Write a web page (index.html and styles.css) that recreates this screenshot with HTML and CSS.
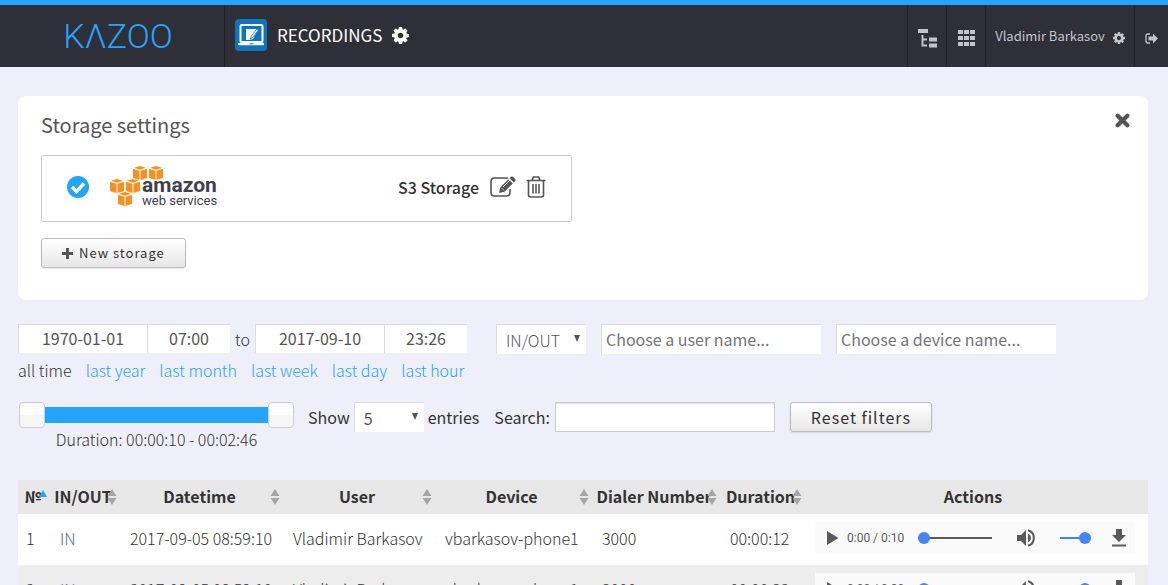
FILE: index.html
```html
<!DOCTYPE html>
<html lang="en">
<head>
<meta charset="utf-8">
<title>Recordings</title>
<link rel="stylesheet" href="styles.css">
</head>
<body>
<svg class="sprite" aria-hidden="true">
  <symbol id="cog" viewBox="0 128 1536 1536"><path d="M1024 896q0-106-75-181t-181-75-181 75-75 181 75 181 181 75 181-75 75-181zm512-109v222q0 12-8 23t-20 13l-185 28q-19 54-39 91 35 50 107 138 10 12 10 25t-9 23q-27 37-99 108t-94 71q-12 0-26-9l-138-108q-44 23-91 38-16 136-29 186-7 28-36 28h-222q-14 0-24.500-8.500t-11.500-21.500l-28-184q-49-16-90-37l-141 107q-10 9-25 9-14 0-25-11-126-114-165-168-7-10-7-23 0-12 8-23 15-21 51-66.500t54-70.500q-27-50-41-99l-183-27q-13-2-21-12.500t-8-23.500v-222q0-12 8-23t19-13l186-28q14-46 39-92-40-57-107-138-10-12-10-24 0-10 9-23 26-36 98.500-107.500t94.500-71.500q13 0 26 10l138 107q44-23 91-38 16-136 29-186 7-28 36-28h222q14 0 24.500 8.500t11.500 21.500l28 184q49 16 90 37l142-107q9-9 24-9 13 0 25 10 129 119 165 170 7 8 7 22 0 12-8 23-15 21-51 66.500t-54 70.500q26 50 41 98l183 28q13 2 21 12.500t8 23.500z"/></symbol>
  <symbol id="cube" viewBox="0 0 14 14"><path d="M7 0l6 1.800-6 2-6-2zM0 2.800l6.500 2V14L0 12zM14 2.800l-6.500 2V14L14 12z"/></symbol>
  <symbol id="sort" viewBox="0 0 10 16"><path d="M5 0l4.500 7h-9zM5 16l4.500-7h-9z"/></symbol>
  <symbol id="play" viewBox="0 0 12 14"><path d="M0 0l11.500 7L0 14z"/></symbol>
  <symbol id="volume" viewBox="0 0 18 18"><path d="M0 6h4l5-5v16l-5-5H0zM11 4.800a4.500 4.500 0 0 1 0 8.400z"/><path d="M11 1.300a8 8 0 0 1 0 15.400" fill="none" stroke="currentColor" stroke-width="2"/></symbol>
  <symbol id="download" viewBox="0 0 14 18"><path d="M4 0h6v6h4l-7 7-7-7h4zM0 15.500h14v2H0z"/></symbol>
</svg>

<header class="topbar">
  <a class="brand" href="#" aria-label="KAZOO">KΛZOO</a>
  <div class="app">
    <svg class="app-icon" viewBox="0 0 32 32"><rect width="32" height="32" rx="4" fill="#0f74bd"/><rect x="5.500" y="6" width="22" height="17" rx="1.500" fill="none" stroke="#fff" stroke-width="2"/><path d="M3 24h26v1.500q0 .7-1 .7H4q-1 0-1-.7z" fill="#fff"/><path d="M14.500 24.800h4" stroke="#0f74bd"/><path d="M11 10h10v4l-3 6-4 1h-3z" fill="#fff"/><path d="M23.500 11l-5.500 7-2.500 2 .8-3 5.500-7z" fill="#fff" stroke="#0f74bd" stroke-width=".8"/></svg>
    <h1 class="app-name">Recordings</h1>
    <button class="plain" aria-label="Recordings settings"><svg class="icon-17"><use href="#cog"/></svg></button>
  </div>
  <nav class="tools">
    <button class="tool" aria-label="Accounts"><svg class="icon-19" viewBox="0 0 19 19"><path d="M0 0h10v4H0zM11 8.500h8v4h-8zM11 14.500h8v4h-8z"/><path d="M4.500 6v10.500H9M4.500 10.500H9" fill="none" stroke="currentColor" stroke-width="2"/></svg></button>
    <button class="tool" aria-label="Applications"><svg class="icon-17" viewBox="0 0 17 17"><path d="M0 0h5v4H0zM6 0h5v4H6zM12 0h5v4h-5zM0 6h5v4H0zM6 6h5v4H6zM12 6h5v4h-5zM0 12h5v4H0zM6 12h5v4H6zM12 12h5v4h-5z"/></svg></button>
    <button class="tool user"><span class="user-name">Vladimir Barkasov</span><svg class="icon-12"><use href="#cog"/></svg></button>
    <button class="tool exit" aria-label="Sign out"><svg class="icon-13" viewBox="0 0 13 12"><path d="M5 1.500H3Q1 1.500 1 3.500v5q0 2 2 2h2" fill="none" stroke="currentColor" stroke-width="1.300"/><path d="M3.500 4H8V1l5 5-5 5V8H3.500z"/></svg></button>
  </nav>
</header>

<main class="page">
  <section class="card">
    <div class="card-head">
      <h2 class="card-title">Storage settings</h2>
      <button class="plain" aria-label="Close"><svg class="icon-15" viewBox="0 0 14 14"><path d="M2.500 2.500l9 9M11.500 2.500l-9 9" stroke="currentColor" stroke-width="4" stroke-linecap="round"/></svg></button>
    </div>
    <div class="storage">
      <svg class="icon-22" viewBox="0 0 22 22"><circle cx="11" cy="11" r="11" fill="#22a5ff"/><path d="M5 11l4.500 4.500L17 7.500" fill="none" stroke="#fff" stroke-width="3.400"/></svg>
      <svg class="aws" viewBox="0 0 112 42" role="img" aria-label="Amazon Web Services">
        <g fill="#f7901e"><use href="#cube" x="23" y="0" width="14" height="14"/><use href="#cube" x="39" y="0" width="14" height="14"/><use href="#cube" x="0" y="13" width="14" height="14"/><use href="#cube" x="16" y="13" width="14" height="14"/><use href="#cube" x="8" y="26" width="14" height="14"/></g>
        <text class="aws-main" x="32" y="26">amazon</text>
        <text class="aws-sub" x="32" y="39">web services</text>
      </svg>
      <strong class="storage-name">S3 Storage</strong>
      <button class="plain" aria-label="Edit storage"><svg class="icon-26" viewBox="0 0 26 22"><path d="M18 2H4.500Q1 2 1 5.500v11Q1 20 4.500 20h12q3.500 0 3.500-3.500V13" fill="none" stroke="currentColor" stroke-width="1.600"/><path d="M9 17l1.200-5.500L18.500 3.200l4.300 4.300-8.300 8.300zM19.500 2.200L21 .8q1-.8 2 0l2.200 2.200q.8 1 0 2l-1.400 1.500z"/><path d="M11.800 12.300l1.900 1.900M13 11l7-7" stroke="#fff" stroke-width=".8"/></svg></button>
      <button class="plain" aria-label="Delete storage"><svg class="icon-22" viewBox="0 0 22 22"><path d="M1.500 4.500h19M7 4.500L8.300 1h5.400L15 4.500M3.500 4.500V19q0 2 2 2h11q2 0 2-2V4.500M8 8v9.500M11 8v9.500M14 8v9.500" fill="none" stroke="currentColor" stroke-width="1.600"/></svg></button>
    </div>
    <button class="btn btn-small"><svg class="icon-11" viewBox="0 0 11 11"><path d="M4 0h3v4h4v3H7v4H4V7H0V4h4z"/></svg>New storage</button>
  </section>

  <form class="filters">
    <div class="row">
      <div class="period">
        <div class="period-fields">
          <input class="field date" aria-label="From date" value="1970-01-01"><input class="field time" aria-label="From time" value="07:00">
          <span class="to">to</span>
          <input class="field date" aria-label="To date" value="2017-09-10"><input class="field time" aria-label="To time" value="23:26">
        </div>
        <div class="presets">
          <a class="preset current" href="#">all time</a><a class="preset" href="#">last year</a><a class="preset" href="#">last month</a><a class="preset" href="#">last week</a><a class="preset" href="#">last day</a><a class="preset" href="#">last hour</a>
        </div>
      </div>
      <span class="pick pick-dir"><select class="select" aria-label="Direction"><option>IN/OUT</option><option>IN</option><option>OUT</option></select></span>
      <input class="field name" aria-label="User name" placeholder="Choose a user name...">
      <input class="field name" aria-label="Device name" placeholder="Choose a device name...">
    </div>
    <div class="row">
      <div class="duration">
        <div class="slider">
          <input class="range" type="range" aria-label="Minimum duration" min="10" max="166" value="10">
          <input class="range" type="range" aria-label="Maximum duration" min="10" max="166" value="166">
        </div>
        <output class="duration-text">Duration: 00:00:10 - 00:02:46</output>
      </div>
      <label class="labelled">Show <span class="pick pick-count"><select class="select"><option>5</option><option>10</option><option>25</option></select></span> entries</label>
      <label class="labelled">Search: <input class="search" type="search"></label>
      <button class="btn" type="reset">Reset filters</button>
    </div>
  </form>

  <table class="calls">
    <colgroup><col class="c-num"><col class="c-dir"><col class="c-date"><col class="c-user"><col class="c-device"><col class="c-dialer"><col class="c-dur"><col></colgroup>
    <thead>
      <tr>
        <th>№<svg class="asc" viewBox="0 0 8 7"><path d="M4 0l4 7H0z"/></svg></th>
        <th>IN/OUT<svg class="sort"><use href="#sort"/></svg></th>
        <th>Datetime<svg class="sort"><use href="#sort"/></svg></th>
        <th>User<svg class="sort"><use href="#sort"/></svg></th>
        <th>Device<svg class="sort"><use href="#sort"/></svg></th>
        <th>Dialer Number<svg class="sort"><use href="#sort"/></svg></th>
        <th>Duration<svg class="sort"><use href="#sort"/></svg></th>
        <th class="last">Actions</th>
      </tr>
    </thead>
    <tbody>
      <tr>
        <td class="num">1</td><td class="dir">IN</td><td>2017-09-05 08:59:10</td><td>Vladimir Barkasov</td><td>vbarkasov-phone1</td><td>3000</td><td>00:00:12</td>
        <td><div class="player"><button class="plain" aria-label="Play"><svg class="icon-play"><use href="#play"/></svg></button><span class="clock">0:00 / 0:10</span><input class="seek" type="range" aria-label="Position" value="0"><button class="plain" aria-label="Mute"><svg class="icon-18"><use href="#volume"/></svg></button><input class="seek level" type="range" aria-label="Volume" value="100"><a class="plain" href="#" aria-label="Download"><svg class="icon-dl"><use href="#download"/></svg></a></div></td>
      </tr>
      <tr>
        <td class="num">2</td><td class="dir">IN</td><td>2017-09-05 08:59:10</td><td>Vladimir Barkasov</td><td>vbarkasov-phone1</td><td>3000</td><td>00:00:32</td>
        <td><div class="player"><button class="plain" aria-label="Play"><svg class="icon-play"><use href="#play"/></svg></button><span class="clock">0:00 / 0:30</span><input class="seek" type="range" aria-label="Position" value="0"><button class="plain" aria-label="Mute"><svg class="icon-18"><use href="#volume"/></svg></button><input class="seek level" type="range" aria-label="Volume" value="100"><a class="plain" href="#" aria-label="Download"><svg class="icon-dl"><use href="#download"/></svg></a></div></td>
      </tr>
    </tbody>
  </table>
</main>
</body>
</html>
```

FILE: styles.css
```css
* { box-sizing: border-box; }
html, body { height: 100%; }
body {
  margin: 0;
  overflow: hidden;
  background: #efeff9;
  color: #333;
  font: 300 16px/24px "Noto Sans CJK SC", "Noto Sans", sans-serif;
}
button, input, select { font: inherit; color: inherit; margin: 0; }
button { cursor: pointer; }
a { color: #22a5ff; text-decoration: none; }
svg { display: block; fill: currentColor; flex: none; }
.sprite { position: absolute; width: 0; height: 0; }
.plain { display: block; padding: 0; border: 0; background: none; color: inherit; }

.icon-11 { width: 11px; height: 11px; }
.icon-12 { width: 12px; height: 12px; }
.icon-13 { width: 13px; height: 13px; }
.icon-15 { width: 15px; height: 15px; }
.icon-17 { width: 17px; height: 17px; }
.icon-18 { width: 18px; height: 18px; }
.icon-19 { width: 19px; height: 19px; }
.icon-22 { width: 22px; height: 22px; }
.icon-26 { width: 26px; height: 22px; }
.icon-play { width: 12px; height: 14px; }
.icon-dl { width: 14px; height: 18px; }

/* Top bar */
.topbar {
  display: flex;
  height: 67px;
  border-top: 5px solid #22a5ff;
  background: #2f2f38;
  color: #fff;
}
.brand {
  width: 225px;
  padding-left: 12px;
  border-right: 1px solid #22222b;
  font: 300 34px/62px Roboto, sans-serif;
  text-align: center;
}
.app { display: flex; align-items: center; gap: 10px; padding: 0 0 2px 10px; }
.app-icon { width: 32px; height: 32px; }
.app-name { margin: 0; font-size: 17px; font-weight: 400; text-transform: uppercase; }
.tools { display: flex; margin-left: auto; color: #c3c3cc; }
.tool {
  display: flex;
  align-items: center;
  justify-content: center;
  gap: 8px;
  width: 39px;
  padding: 4px 0 0;
  border: 0;
  border-left: 1px solid #22222b;
  background: none;
  font-size: 13px;
  font-weight: 400;
}
.user { width: 149px; }
.user-name { padding-bottom: 4px; }
.exit { width: 34px; }

/* Storage card */
.page { padding: 29px 20px 0 18px; }
.card { height: 204px; padding: 16px 18px 0 23px; border-radius: 8px; background: #fff; }
.card-head { display: flex; justify-content: space-between; align-items: flex-start; color: #555; }
.card-head .plain { padding: 1px 0; }
.card-title { margin: 0 0 17px; font-size: 20px; line-height: 26px; font-weight: 400; }
.storage {
  display: flex;
  align-items: center;
  width: 531px;
  max-width: 100%;
  height: 67px;
  margin-bottom: 16px;
  padding: 0 24px 3px 25px;
  border: 1px solid #ccccd4;
  border-radius: 2px;
  color: #555;
}
.aws { width: 112px; height: 42px; margin-left: 21px; }
.aws-main { font: bold 21px Roboto, sans-serif; fill: #414149; }
.aws-sub { font: 13px Roboto, sans-serif; fill: #414149; }
.storage-name { margin: 0 11px 0 auto; color: #333; font-weight: 500; }
.storage .plain + .plain { margin-left: 9px; }
.btn {
  display: flex;
  align-items: center;
  justify-content: center;
  gap: 6px;
  height: 30px;
  padding: 0 20px;
  border: 1px solid #bbb;
  border-radius: 3px;
  background: linear-gradient(#fff, #e6e6e6);
  box-shadow: 0 1px 2px rgba(0, 0, 0, .1);
  color: #333;
  font-weight: 400;
  letter-spacing: 1px;
}
.btn-small { font-size: 13px; }
.btn svg { color: #555; }

/* Filters */
.filters { padding-top: 24px; color: #333; }
.row { display: flex; align-items: flex-start; height: 78px; }
.period { margin-right: 29px; }
.period-fields { display: flex; align-items: center; height: 29px; }
.field {
  height: 30px;
  padding: 0 4px 2px;
  border: solid #ddd;
  border-width: 1px 0 0 1px;
  border-radius: 0;
  background: #fff;
  color: #555;
  font-weight: 400;
}
.field::placeholder { color: #757575; opacity: 1; }
.date, .time { height: 29px; text-align: center; }
.date { width: 129px; }
.time { width: 83px; }
.to { width: 25px; text-align: center; }
.presets { display: flex; gap: 14px; margin-top: 5px; }
.current { color: #333; }
.name { width: 220px; margin-left: 15px; }
.pick { position: relative; display: inline-block; }
.pick::after {
  content: "";
  position: absolute;
  top: 11px;
  right: 6px;
  border: solid transparent;
  border-width: 7px 3px 0;
  border-top-color: #555;
  pointer-events: none;
}
.select {
  appearance: none;
  display: block;
  width: 100%;
  height: 30px;
  padding: 0 9px;
  border: solid #ddd;
  border-width: 1px 0 0 1px;
  border-radius: 0;
  background: #fff;
  color: #555;
}
.pick-dir { width: 90px; }
.pick-count { width: 70px; margin: 0 4px; }
.duration { width: 277px; margin-right: 13px; }
.slider {
  position: relative;
  height: 26px;
  background: linear-gradient(#22a5ff, #22a5ff) center / 240px 16px no-repeat;
}
.range {
  appearance: none;
  position: absolute;
  inset: 0;
  width: 100%;
  height: 26px;
  padding: 0 1px;
  background: none;
  pointer-events: none;
}
.range::-webkit-slider-thumb {
  appearance: none;
  width: 26px;
  height: 26px;
  border: 1px solid #ccc;
  border-radius: 4px;
  background: linear-gradient(#fcfcfc 50%, #f6f6f6 50%);
  pointer-events: auto;
}
.duration-text { display: block; line-height: 22px; text-align: center; }
.labelled { display: flex; align-items: center; height: 30px; margin-right: 15px; font-weight: 400; }
.search {
  width: 220px;
  height: 30px;
  margin-left: 5px;
  border: 1px solid #ccc;
  background: #fff;
  box-shadow: inset 0 1px 1px rgba(0, 0, 0, .12);
}

/* Call table */
.calls { width: 100%; table-layout: fixed; border-collapse: collapse; white-space: nowrap; }
.c-num { width: 30px; }
.c-dir { width: 70px; }
.c-date { width: 163px; }
.c-user { width: 152px; }
.c-device { width: 157px; }
.c-dialer { width: 128px; }
.c-dur { width: 85px; }
.calls th {
  position: relative;
  height: 34px;
  padding: 0 0 2px;
  background: #e7e7e7;
  font-weight: 700;
}
.sort { position: absolute; top: 9px; right: 1px; width: 10px; height: 16px; color: #a5a5a5; }
.asc { position: absolute; top: 10px; right: 1px; width: 8px; height: 7px; color: #22a5ff; }
.calls .last { padding-right: 5px; }
.calls td { height: 51px; padding: 0 0 3px 12px; background: #fff; }
.calls tr:nth-child(2) td { background: #ededed; }
.calls .num { padding-left: 8px; }
.dir { color: #5b6d8c; }
.player {
  display: flex;
  align-items: center;
  width: 320px;
  height: 32px;
  padding: 0 9px 0 12px;
  background: #fafafa;
  color: #5a5a5a;
}
.clock { width: 60px; margin: 0 11px 0 8px; font: 400 12px/16px Roboto, sans-serif; }
.seek { appearance: none; width: 74px; height: 12px; margin-right: 25px; background: linear-gradient(#5a5a5a, #5a5a5a) center / 100% 2px no-repeat; }
.seek::-webkit-slider-thumb { appearance: none; width: 12px; height: 12px; border-radius: 50%; background: #4285f4; }
.level { width: 31px; margin: 0 21px 0 25px; background-image: linear-gradient(#4285f4, #4285f4); }
```
